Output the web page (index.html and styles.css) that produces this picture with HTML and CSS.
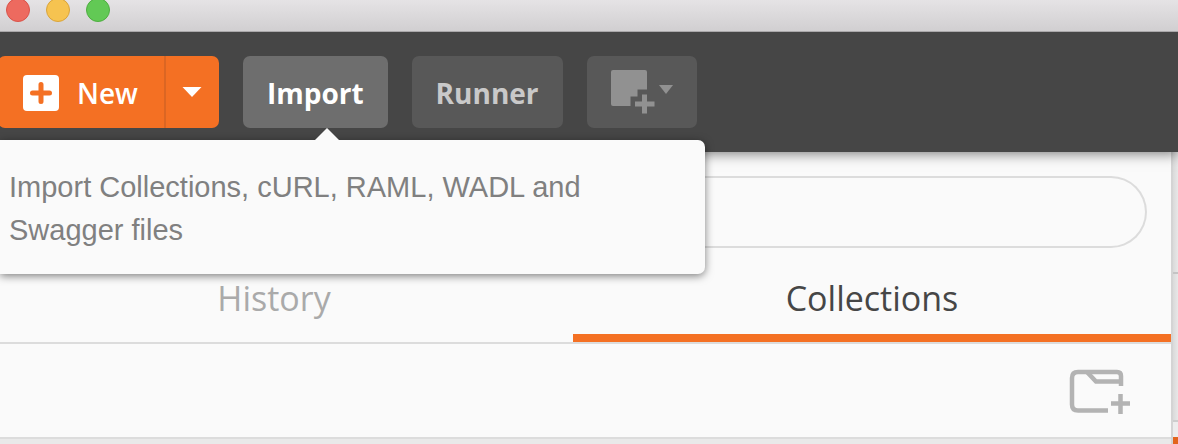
FILE: index.html
```html
<!DOCTYPE html>
<html lang="en">
<head>
<meta charset="utf-8">
<title>Collections</title>
<link rel="stylesheet" href="styles.css">
</head>
<body>
<div class="titlebar">
  <span class="light light-close"></span>
  <span class="light light-minimize"></span>
  <span class="light light-zoom"></span>
</div>
<header class="toolbar">
  <div class="split">
    <button class="btn btn-new" type="button">
      <svg width="36" height="36" viewBox="0 0 36 36" aria-hidden="true">
        <rect width="36" height="36" rx="4" fill="#fff"/>
        <path d="M18 9.500v17M9.500 18h17" stroke="#f47023" stroke-width="5" stroke-linecap="round"/>
      </svg>
      New
    </button>
    <button class="btn btn-more" type="button" aria-label="More new options">
      <svg width="20" height="10" viewBox="0 0 20 10" aria-hidden="true"><path d="M.5 0h19L10 10z" fill="#fff"/></svg>
    </button>
  </div>
  <div class="import">
    <button class="btn btn-import" type="button" aria-describedby="import-tip">Import</button>
    <svg class="tip-arrow" width="24" height="13" viewBox="0 0 24 13" aria-hidden="true"><path d="M0 13v-1L12 0l12 12v1z" fill="#fafafa"/></svg>
  </div>
  <button class="btn btn-runner" type="button">Runner</button>
  <button class="btn btn-window" type="button" aria-label="Open new window">
    <svg width="62" height="44" viewBox="0 0 62 44" fill="#919191" aria-hidden="true">
      <path d="M2 0h32q2 0 2 2v17.500H26.500v7H19.500V36H2q-2 0-2-2V2q0-2 2-2z"/>
      <path d="M31 24.500h5v7h7.500v5H36v7h-5v-7h-7v-5h7z"/>
      <path d="M48 15h14L55 24z"/>
    </svg>
  </button>
  <div class="tip" id="import-tip" role="tooltip">Import Collections, cURL, RAML, WADL and Swagger files</div>
</header>
<div class="workspace">
  <aside class="sidebar">
    <div class="search"><input class="search-input" type="text" aria-label="Filter"></div>
    <div class="tabs" role="tablist">
      <button class="tab" type="button" role="tab" aria-selected="false">History</button>
      <button class="tab tab-active" type="button" role="tab" aria-selected="true">Collections</button>
    </div>
    <div class="actions">
      <button class="add-folder" type="button" aria-label="New collection">
        <svg width="62" height="46" viewBox="0 0 62 46" fill="none" stroke="#b3b3b3" stroke-width="4.500" aria-hidden="true">
          <path d="M39 41.500H9q-6 0-6-6V9q0-6 6-6h39q4 0 4 4v10"/>
          <path d="M18 3l9 9.500h25"/>
          <path d="M51.500 25v20M42 34.500h19"/>
        </svg>
      </button>
    </div>
    <div class="list"></div>
  </aside>
  <main class="content">
    <div class="content-head"></div>
    <div class="content-body"></div>
    <div class="content-foot"></div>
    <div class="content-accent"></div>
  </main>
</div>
</body>
</html>
```
FILE: styles.css
```css
* {
  box-sizing: border-box;
}

body {
  margin: 0;
  min-height: 100vh;
  display: flex;
  flex-direction: column;
  overflow: hidden;
  background: #fafafa;
  font-family: "Open Sans", "Noto Sans", sans-serif;
}

button {
  margin: 0;
  padding: 0;
  border: 0;
  background: none;
  color: inherit;
  font: inherit;
}

svg {
  display: block;
  flex: none;
}

.titlebar {
  position: relative;
  z-index: 2;
  display: flex;
  align-items: flex-end;
  gap: 16px;
  height: 32px;
  padding: 0 6px 9px;
  background: linear-gradient(#e5e3e5, #d1cfd1);
  border-bottom: 1px solid #aaa8aa;
}

.light {
  width: 24px;
  height: 24px;
  flex: none;
  border-radius: 50%;
}

.light-close {
  background: #ed6a5f;
  border: 1px solid #d9534a;
}

.light-minimize {
  background: #f6c350;
  border: 1px solid #d9a43c;
}

.light-zoom {
  background: #62c955;
  border: 1px solid #4fae41;
}

.toolbar {
  position: relative;
  z-index: 1;
  display: flex;
  gap: 24px;
  height: 120px;
  padding: 24px 24px 24px 0;
  background: #464646;
  box-shadow: 0 2px 12px rgba(0, 0, 0, 0.5);
}

.btn {
  display: flex;
  align-items: center;
  justify-content: center;
  height: 72px;
  padding: 2px 24px 0;
  border-radius: 7px;
  background: #585858;
  color: #c9c9c9;
  font-size: 28px;
  font-weight: 700;
  line-height: 40px;
}

.split {
  display: flex;
  margin-left: -2px;
}

.btn-new {
  gap: 18px;
  padding: 2px 26px 0 25px;
  border-radius: 7px 0 0 7px;
  background: #f47023;
  color: #fff;
  font-weight: 600;
}

.btn-more {
  width: 55px;
  padding: 0;
  border-left: 2px solid #db6623;
  border-radius: 0 7px 7px 0;
  background: #f47023;
}

.btn-window {
  padding-top: 0;
}

.import {
  position: relative;
}

.btn-import {
  background: #6e6e6e;
  color: #fff;
}

.tip-arrow {
  position: absolute;
  z-index: 2;
  top: 72px;
  left: 50%;
}

.tip {
  position: absolute;
  top: 108px;
  left: 0;
  width: 705px;
  padding: 26px 120px 22px 9px;
  border-radius: 0 7px 7px 0;
  background: #fafafa;
  box-shadow: 0 2px 8px rgba(0, 0, 0, 0.5);
  color: #808080;
  font-family: "Liberation Sans", Arial, sans-serif;
  font-size: 29px;
  line-height: 43px;
}

.workspace {
  flex: 1;
  display: grid;
  grid-template-columns: 1fr 7px;
}

.sidebar {
  display: flex;
  flex-direction: column;
  min-width: 0;
}

.search {
  padding: 24px 24px 0 0;
}

.search-input {
  display: block;
  width: 100%;
  height: 72px;
  padding: 0 32px;
  border: 2px solid #dcdcdc;
  border-left: 0;
  border-radius: 0 36px 36px 0;
  background: transparent;
  font: inherit;
}

.tabs {
  display: grid;
  grid-template-columns: 1fr 1fr;
  margin-left: -25px;
  border-bottom: 2px solid #dcdcdc;
}

.tab {
  height: 94px;
  padding-top: 14px;
  border-bottom: 8px solid transparent;
  color: #aaa;
  font-size: 34px;
  line-height: 48px;
}

.tab-active {
  border-bottom-color: #f47023;
  color: #464646;
}

.actions {
  display: flex;
  justify-content: flex-end;
  align-items: center;
  height: 95px;
  padding: 2px 40px 0 0;
  border-bottom: 2px solid #dcdcdc;
}

.list {
  flex: 1;
  background: #e9e9e9;
}

.content {
  display: flex;
  flex-direction: column;
  border-left: 2px solid #d4d4d4;
  background: linear-gradient(90deg, #dadada, #e8e8e8);
}

.content-head {
  height: 120px;
}

.content-body {
  height: 148px;
  border-top: 2px solid #c4c4c4;
}

.content-foot {
  height: 17px;
  border-top: 2px solid #cdcdcd;
  background: #ededed;
}

.content-accent {
  flex: 1;
  background: #e2641d;
}
```
